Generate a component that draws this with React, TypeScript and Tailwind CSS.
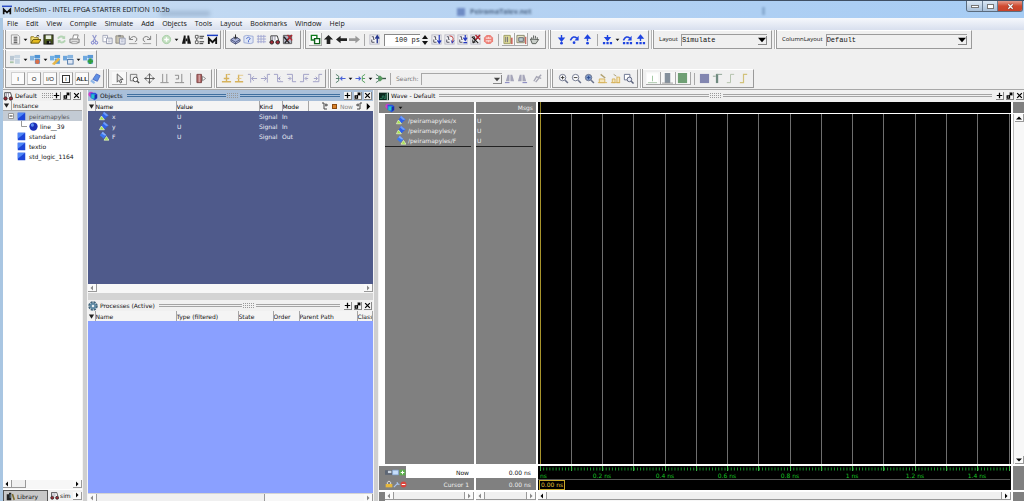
import React from "react";

type Kids = { children?: React.ReactNode };

/* ---------- icon drawings, all on a 12 x 12 grid ---------- */

const gate = (color: string) => (
  <>
    <rect x="1" y="1" width="10" height="10" fill="#f4f4f6" stroke="#b9b9c4" />
    <path d="M3 3h2v3h1M3 6v3h3" stroke={color} fill="none" />
  </>
);

const cubes = (a: string, b: string, extra?: React.ReactNode) => (
  <>
    <rect x="0" y="2" width="5" height="5" fill={a} />
    <rect x="5" y="1" width="6" height="5" fill={b} />
    <rect x="5" y="5" width="6" height="6" fill={b} stroke="#fff" strokeWidth=".5" />
    {extra}
  </>
);

const lens = (inner?: React.ReactNode, fill = "#fff") => (
  <>
    <circle cx="5" cy="5" r="3.5" fill={fill} stroke="#6b728a" />
    <path d="M7.8 7.8l3 3" stroke="#6b728a" strokeWidth="1.6" />
    {inner}
  </>
);

const gold = "#d6b25c";
const violet = "#9c9cc4";
const blue = "#1f44e0";

const icons: Record<string, React.ReactNode> = {
  caret: <path d="M3.500 5h5L6 8z" fill="#111" />,
  bigCaret: <path d="M1.500 2.500h9L6 10z" fill="#222" />,
  file: (
    <>
      <path d="M1.500 1h7l2 2v8h-9z" fill="#f4f4f4" stroke="#999" />
      <path d="M4 3.500h4M4 5.500h4M4 7.500h4M4 9.500h4" stroke="#333" />
    </>
  ),
  open: (
    <>
      <path d="M1 10V3h3l1 1h4v2" fill="#f7e27a" stroke="#8a7410" />
      <path d="M1 10l2.500-4H12L9.500 10z" fill="#e3b91c" stroke="#5f5008" />
      <path d="M7 2.500q2-2 3 0" stroke="#222" fill="none" />
    </>
  ),
  save: (
    <>
      <rect x="1" y="1" width="10" height="10" fill="#4c5a1d" stroke="#222" />
      <rect x="3" y="1.500" width="6" height="4" fill="#e9efe0" />
      <rect x="4" y="7.500" width="5" height="3.500" fill="#111" />
      <rect x="7" y="8" width="1" height="2" fill="#fff" />
    </>
  ),
  reload: (
    <>
      <path d="M2 5q3-4 7-1M10 7q-3 4-7 1" stroke="#b4d4b4" strokeWidth="2" fill="none" />
      <path d="M10 1.500v4H6.500zM2 10.500v-4h3.500z" fill="#b4d4b4" />
    </>
  ),
  print: (
    <>
      <path d="M4 5l1-4h5L9 5" fill="#fff" stroke="#888" />
      <path d="M1 5.500h10v4H1z" fill="#ddd" stroke="#777" />
      <path d="M3 8.500h6v2H3z" fill="#fff" stroke="#999" />
    </>
  ),
  cut: (
    <>
      <path d="M4 1l3.500 7M8 1L4.500 8" stroke="#8f95cc" strokeWidth="1.200" />
      <circle cx="4" cy="9.500" r="1.500" fill="none" stroke="#6b72c8" />
      <circle cx="8" cy="9.500" r="1.500" fill="none" stroke="#6b72c8" />
    </>
  ),
  copy: (
    <>
      <path d="M1 1.500h5v7H1z" fill="#fff" stroke="#9fa4b8" />
      <path d="M5 4.500h6v6H5z" fill="#fff" stroke="#8b90a8" />
      <path d="M2.500 3.500h2M6.500 6.500h3M6.500 8.500h3" stroke="#a9aec4" />
    </>
  ),
  paste: (
    <>
      <path d="M1 2h8v8H1z" fill="#c9c4b2" stroke="#8d8a80" />
      <path d="M3.500 1h3v2h-3z" fill="#888" />
      <path d="M5 4.500h6v6.500H5z" fill="#eef0f8" stroke="#8b90a8" />
      <path d="M6.500 6.500h3M6.500 8.500h3" stroke="#a9aec4" />
    </>
  ),
  undo: (
    <>
      <path d="M1.500 2v4h4" stroke="#777" fill="none" />
      <path d="M2 5.500q4-5 7.500-1 1 3-2 4" stroke="#777" fill="none" />
      <path d="M1 10.500h9" stroke="#999" />
    </>
  ),
  redo: (
    <>
      <path d="M10.500 2v4h-4" stroke="#777" fill="none" />
      <path d="M10 5.500q-4-5-7.500-1-1 3 2 4" stroke="#777" fill="none" />
      <path d="M2 10.500h9" stroke="#999" />
    </>
  ),
  add: (
    <>
      <circle cx="6" cy="6" r="4.500" fill="#c3dfc0" stroke="#a6cda5" />
      <path d="M6 3.500v5M3.500 6h5" stroke="#fff" strokeWidth="1.500" />
    </>
  ),
  find: (
    <>
      <path d="M1 10.500L3 3h2v7.500zM11 10.500L9 3H7v7.500z" fill="#161616" />
      <path d="M3 1.500h2v2H3zM7 1.500h2v2H7zM5 5h2v3H5z" fill="#161616" />
    </>
  ),
  list: (
    <>
      <path d="M1.500 1.500h3v3h-3zM1.500 7.500h3v3h-3z" fill="#fff" stroke="#555" />
      <path d="M6 2.500h5M6 4.500h4M6 8.500h5M6 10.500h4M3 5v2" stroke="#222" />
    </>
  ),
  logo: (
    <>
      <path d="M0 1.500h12" stroke="#1c3fc4" strokeWidth="1.600" />
      <path d="M2 11V5l4 4 4-4v6" stroke="#111" strokeWidth="2" fill="none" />
    </>
  ),
  compile: (
    <>
      <path d="M1 6l5-3 5 3v2l-5 3-5-3z" fill="#aab4dc" stroke="#4a5278" />
      <path d="M1 6l5 3 5-3M6 9v2" stroke="#4a5278" fill="none" />
      <path d="M6 .5v4M4 3.500l2 2 2-2" stroke="#222" fill="none" />
    </>
  ),
  compileAll: (
    <>
      <path d="M1 2.500l3-1 7 1v7l-3 1-7-1z" fill="#dfe6f6" stroke="#9aa8d4" />
      <path d="M3.500 5q2.500-3 4.500 0L6 7v2" stroke="#4667c8" fill="none" />
    </>
  ),
  grid: (
    <path d="M1 2.500h10M1 5.500h10M1 8.500h10M2.500 1v9M5.500 1v9M8.500 1v9" stroke="#a3a8d2" />
  ),
  sim: (
    <>
      <path d="M2 7V2h7l1.500 5" fill="#fff" stroke="#333" />
      <path d="M4 2v5M6.500 2v5" stroke="#889" />
      <circle cx="3" cy="9" r="2" fill="#a22a36" stroke="#222" />
      <circle cx="9.500" cy="9" r="2" fill="#a22a36" stroke="#222" />
    </>
  ),
  simEnd: (
    <>
      <path d="M1.500 1.500h9v9h-9z" fill="#b4b4c4" stroke="#555" />
      <path d="M2 3l6 7M9.500 2L3 10" stroke="#222" strokeWidth="1.500" />
      <path d="M6 1l5 6M11 1L6 7" stroke="#b52631" strokeWidth="1.500" />
    </>
  ),
  restart: (
    <>
      <path d="M1.500 1.500h6v5h-6z" fill="#fff" stroke="#0e7a1c" strokeWidth="1.500" />
      <path d="M5 5h5.500v5.500H5z" fill="#fff" stroke="#0d5f18" strokeWidth="1.500" />
    </>
  ),
  up: <path d="M6 1l5 5H8v5H4V6H1z" fill="#222" />,
  left: <path d="M0 6l5-4v2.500h7v3H5V10z" fill="#222" />,
  right: <path d="M12 6L7 2v2.500H0v3h7V10z" fill="#999" />,
  runUp: (
    <>
      {gate("#445")}
      <path d="M9 10V3M7 5l2-3 2 3" stroke="#24368f" strokeWidth="1.500" fill="none" />
    </>
  ),
  run: (
    <>
      {gate("#445")}
      <path d="M9 1v8M7 7l2 3 2-3" stroke="#2438bf" strokeWidth="1.300" fill="none" />
    </>
  ),
  runCont: (
    <>
      {gate("#445")}
      <path d="M6 2q4 0 4 3l-1 5" stroke="#b33" fill="none" />
      <path d="M8 7l1 3 2-3" stroke="#2438bf" fill="none" />
    </>
  ),
  runAll: (
    <>
      {gate("#445")}
      <path d="M9 1v5M7 4l2 3 2-3M7 9.500h4" stroke="#2438bf" strokeWidth="1.300" fill="none" />
    </>
  ),
  breakRun: (
    <>
      {gate("#222")}
      <path d="M2 3l7 7M10 2L3 10" stroke="#222" strokeWidth="1.300" />
      <path d="M6 1l5 5M11 1L6 6" stroke="#b52631" strokeWidth="1.500" />
    </>
  ),
  stop: (
    <>
      <path d="M4 1h4l3 3v4l-3 3H4L1 8V4z" fill="#ec8178" />
      <path d="M3 4.500h6M3 7.500h6" stroke="#fbdcd8" strokeWidth="1.200" />
      <path d="M6 3v2M6 7v2" stroke="#fbdcd8" />
    </>
  ),
  perf: (
    <>
      <path d="M1 1.500h7v9H1z" fill="#e4e09a" stroke="#9b9b62" />
      <path d="M3 3v6M5 3v6" stroke="#667" />
      <path d="M9.500 4v7" stroke="#c9695f" strokeWidth="2" />
    </>
  ),
  memory: (
    <>
      <path d="M1 1.500h8v8H1z" fill="#e9e7c4" stroke="#84846a" />
      <path d="M3 4h5v4H3z" fill="#bcc" stroke="#667" />
      <path d="M10.500 3v8" stroke="#c9695f" strokeWidth="1.500" />
    </>
  ),
  hand: (
    <path
      d="M3 6V3.500M5 5V1.500M7 5V2M9 6V3.500M1.500 5.500l2 5h4L10.500 6z"
      fill="#c9cec9"
      stroke="#525852"
    />
  ),
  stepInto: (
    <>
      <path d="M6 1v5M3.500 4.500L6 7.500l2.500-3z" stroke={blue} strokeWidth="1.500" fill={blue} />
      <circle cx="6" cy="10" r="1.500" fill={blue} />
    </>
  ),
  stepOver: (
    <>
      <path d="M1.500 7q3-6 7-2.500" stroke={blue} strokeWidth="1.700" fill="none" />
      <path d="M10.500 2v5H6z" fill={blue} />
      <circle cx="5.500" cy="9.500" r="1.500" fill={blue} />
    </>
  ),
  stepOut: (
    <>
      <path d="M6 7.500V3M3.500 4.500L6 1.500l2.500 3z" stroke={blue} strokeWidth="1.500" fill={blue} />
      <circle cx="6" cy="10" r="1.500" fill={blue} />
    </>
  ),
  stepIntoAll: (
    <>
      <path d="M6 1v4M3.500 4L6 7l2.500-3z" stroke={blue} strokeWidth="1.500" fill={blue} />
      <path d="M1 10h2.500M4.800 10h2.500M8.500 10H11" stroke={blue} strokeWidth="2.400" />
    </>
  ),
  stepOverAll: (
    <>
      <path d="M1.500 7q3-6 7-2.500" stroke={blue} strokeWidth="1.700" fill="none" />
      <path d="M10.500 2v5H6z" fill={blue} />
      <path d="M1 10h2.500M4.800 10h2.500M8.500 10H11" stroke={blue} strokeWidth="2.400" />
    </>
  ),
  stepOutAll: (
    <>
      <path d="M6 7.500V3M3.500 4.500L6 1.500l2.500 3z" stroke={blue} strokeWidth="1.500" fill={blue} />
      <path d="M1 10h2.500M4.800 10h2.500M8.500 10H11" stroke={blue} strokeWidth="2.400" />
    </>
  ),
  cubeGray: cubes("#b9c7d3", "#c6d4e0", <path d="M0 9h4" stroke="#a8c4a8" strokeWidth="2" />),
  cubeRed: cubes("#7fb2e0", "#4f93d4", <circle cx="8" cy="8.500" r="2.500" fill="#d9704a" />),
  cubeEdit: cubes("#6fb0e6", "#5aa0dc", <path d="M2 11l7-7 2 2-6 6z" fill="#e6b64a" />),
  cubeSave: cubes("#6ea6dc", "#86b4e0", <rect x="5" y="6" width="6" height="5" fill="#dfe8f4" stroke="#5078a8" />),
  cubeAdd: cubes("#6fa9e0", "#5b98d6", <path d="M8 5v6M5 8h6" stroke="#2fa03c" strokeWidth="2.500" />),
  tag: (
    <>
      <path d="M3 7l4-6 4 2-3 6z" fill="#5f8fe4" stroke="#4a6cc4" />
      <path d="M1 8l4 3" stroke="#8fb7e8" strokeWidth="2.500" />
    </>
  ),
  cursor: <path d="M3.500 1v9l2-2 1.500 3 1.500-1L7 7h3z" fill="#e4e4e4" stroke="#555" />,
  zoomBox: (
    <>
      <path d="M1.500 1.500h7v7h-7z" fill="none" stroke="#777" />
      <circle cx="7" cy="7" r="2.500" fill="#fff" stroke="#444" />
      <path d="M9 9l2 2" stroke="#444" strokeWidth="1.500" />
    </>
  ),
  pan: (
    <path d="M6 .5v11M.5 6h11M4 3l2-2 2 2M4 9l2 2 2-2M3 4L1 6l2 2M9 4l2 2-2 2" stroke="#555" fill="none" />
  ),
  twoCursor: <path d="M4 1v9M8.500 1v9M1.500 10.500h9" stroke="#8b8b8b" fill="none" />,
  editWave: <path d="M1 2.500h4v4H2M1 10.500h5M8.500 1v9M6 10.500h5" stroke="#858585" fill="none" />,
  stopDraw: (
    <>
      <path d="M1 1.500h5v9H1z" fill="#b46a6a" stroke="#7c4444" />
      <path d="M3.500 2v8" stroke="#e0c0c0" />
      <path d="M7 3.500l3.500 2.500L7 8.500z" fill="#fff" stroke="#888" />
    </>
  ),
  edgeIns: (
    <>
      <path d="M6 1v8M3 6h6M1 9.500h10" stroke={gold} strokeWidth="1.500" />
      <path d="M7 1.500h3" stroke={gold} />
    </>
  ),
  edgeDel: (
    <>
      <path d="M5 2v7M1 9.500h9" stroke={gold} strokeWidth="1.500" />
      <path d="M5 2.500h5M3 6h5" stroke="#e2c784" />
    </>
  ),
  prevEdge: <path d="M1 1.500h3v9M11 6H5M7.500 3.500L5 6l2.500 2.500" stroke={violet} fill="none" />,
  nextEdge: <path d="M11 1.500H8v9M1 6h6M4.500 3.500L7 6 4.500 8.500" stroke={violet} fill="none" />,
  fallPrev: <path d="M1 1.500h4v8h6M8 6H5.500M8 4L6 6l2 2" stroke={violet} fill="none" />,
  fallNext: <path d="M1 1.500h6v8h4M2 6h3M3.500 4l2 2-2 2" stroke={violet} fill="none" />,
  risePrev: <path d="M11 1.500H5v8H1M10 6H7M8.500 4l-2 2 2 2" stroke={violet} fill="none" />,
  riseNext: <path d="M11 1.500H7.500v8H1M2 6h3.500M4 4l2 2-2 2" stroke={violet} fill="none" />,
  fanIn: (
    <>
      <path d="M1 1.500l3 2v5l-3 2M1 6h4" stroke="#4c7a66" fill="none" />
      <path d="M11.500 6H6M8 4L6 6l2 2" stroke="#4a63d6" strokeWidth="1.200" fill="none" />
    </>
  ),
  fanOut: (
    <>
      <path d="M11 1.500l-3 2v5l3 2M11 6H8" stroke="#4c9a56" fill="none" />
      <path d="M.5 6H6M4 4l2 2-2 2" stroke="#4a63d6" strokeWidth="1.200" fill="none" />
    </>
  ),
  fanBoth: (
    <>
      <path d="M1 1.500l3 2v5l-3 2M1 6h3" stroke="#4c7a66" fill="none" />
      <path d="M4 3h2l3 3-3 3H4z" fill="#5a9c62" />
      <path d="M8 6h4" stroke="#3d5a4a" strokeWidth="1.500" />
    </>
  ),
  findPrev: (
    <>
      <path d="M2 9L4 2h2v7zM11 9L9 2H7v7z" fill="#a6a6ba" />
      <path d="M1 10.500h5" stroke="#7777b8" />
    </>
  ),
  findNext: (
    <>
      <path d="M1 9L3 2h2v7zM10 9L8 2H6v7z" fill="#a6a6ba" />
      <path d="M6 10.500h5" stroke="#7777b8" />
    </>
  ),
  findOpts: <path d="M2 9l3-5 2 1 3-3M4 10l4-5 2 1" stroke="#a6a6b4" strokeWidth="1.500" fill="none" />,
  zoomIn: lens(<path d="M5 3v4M3 5h4" stroke="#333" />),
  zoomOut: lens(<path d="M3 5h4" stroke="#333" />),
  zoomFull: lens(<path d="M3 5h4M5 3v4" stroke="#2d4a8c" />, "#7f9ccb"),
  zoomCur: (
    <>
      <path d="M1 10.500h10M2.500 6.500h6v4h-6z" stroke={gold} fill="#f6e6bc" />
      <path d="M4 1.500l5 4" stroke="#b0a070" strokeWidth="1.500" />
    </>
  ),
  zoomTwo: (
    <>
      <path d="M1 10.500h10M2.500 6.500h3v4h-3zM7.500 4.500h3v6h-3z" stroke={gold} fill="#f6e6bc" />
      <path d="M4 1.500l3 2" stroke="#a79a70" />
    </>
  ),
  zoomArea: (
    <>
      <path d="M1.500 1.500h6v6h-6z" fill="#fff" stroke="#66708c" />
      <circle cx="7" cy="7" r="2.500" fill="#e6eaf6" stroke="#555d77" />
      <path d="M9 9l2.500 2.500" stroke="#555d77" strokeWidth="1.500" />
    </>
  ),
  barThin: (
    <>
      <path d="M0 .5h12V11H0z" fill="#fff" />
      <path d="M6 3v6" stroke="#9cc49c" />
      <path d="M1 10.500h10" stroke="#a9c4a9" />
    </>
  ),
  barWide: (
    <>
      <path d="M3 0h6v11H3z" fill="#84909c" />
      <path d="M0 11h12" stroke="#999" />
    </>
  ),
  barFull: <path d="M1 0h10v11H1z" fill="#6f9f74" />,
  solid: <path d="M1 1h10v10H1z" fill="#8286b0" />,
  wave1: (
    <>
      <path d="M5.500 1v10" stroke="#6f8a80" strokeWidth="2.500" />
      <path d="M5 1.500h6M1 3.500h3" stroke="#8aa08f" />
    </>
  ),
  wave2: <path d="M2 10.500h4v-9h4" stroke="#b0bfa8" fill="none" />,
  wave3: <path d="M2 10.500h4v-9h4" stroke="#d2c27a" fill="none" strokeWidth="1.300" />,
  gear: (
    <>
      <circle cx="6" cy="6" r="4.300" stroke="#41637a" strokeWidth="2.800" strokeDasharray="2.400 .98" />
      <circle cx="6" cy="6" r="4" fill="#5f8aa4" />
      <circle cx="6" cy="6" r="1.500" fill="#e8eef2" />
    </>
  ),
  objects: (
    <>
      <circle cx="3.500" cy="4" r="3" fill="#d23ec8" />
      <path d="M3 2h6l2 2v5l-3 2-5-3z" fill="#2a55e0" />
      <path d="M4 4h4v5H4z" fill="#21c5c9" />
      <path d="M8 5l3-1v4l-3 2z" fill="#1b2ca8" />
    </>
  ),
  waveWin: (
    <>
      <path d="M0 2h12v9H0z" fill="#0c2a20" />
      <path d="M1 9h3V6h2v3h2V4h1" stroke="#2f8060" fill="none" />
      <path d="M10 2v9" stroke="#dfe" />
    </>
  ),
  sigIn: (
    <>
      <path d="M6 1l5.500 4.500L6.500 10 3 6z" fill="#2f62e8" />
      <path d="M6 1l5.500 4.500-3 .5L5 3z" fill="#6f9cf6" />
      <path d="M.5 10.500L3 6l3.500 4.500z" fill="#a6e34a" stroke="#eefbd0" strokeWidth=".8" />
    </>
  ),
  sigOut: (
    <>
      <path d="M4.500 1L9 5 5.500 9 1 5z" fill="#3a78f0" />
      <path d="M4.500 1L9 5l-2 .5L3 3z" fill="#86acf8" />
      <path d="M6 11l3-4.500 3 4.500z" fill="#a6e34a" stroke="#eefbd0" strokeWidth=".8" />
    </>
  ),
  unit: (
    <>
      <path d="M1 1h10v10H1z" fill="#1d45d8" />
      <path d="M1 1h10L1 9z" fill="#4f86f6" />
    </>
  ),
  ball: (
    <>
      <circle cx="6" cy="6" r="5.500" fill="#1a2fb8" />
      <circle cx="4.500" cy="4" r="2.200" fill="#5d8df2" />
    </>
  ),
  books: (
    <>
      <path d="M1 3h3v8H1zM4 1h3v10H4z" fill="#222" />
      <path d="M7.500 3l2-.7L12 10l-2 1z" fill="#7a6a2a" />
      <path d="M5 3h1v5H5z" fill="#7aa7c4" />
    </>
  ),
  savePic: (
    <>
      <path d="M0 2h12v8H0z" fill="#5d6674" />
      <path d="M5 3h6v4H5z" fill="#ced7e2" />
    </>
  ),
  sheet: <path d="M1 2h10v8H1z" fill="#c7defa" stroke="#7aa4da" />,
  plusGreen: (
    <>
      <path d="M1 1h10v10H1z" fill="#5cae4c" />
      <path d="M6 3v6M3 6h6" stroke="#fff" strokeWidth="1.800" />
    </>
  ),
  lock: (
    <>
      <path d="M3.500 6V3.500q2.500-4 5 0V6" stroke="#ddd" strokeWidth="1.500" fill="none" />
      <path d="M1 6h10v5H1z" fill="#e8b93c" />
    </>
  ),
  wrench: <path d="M1.500 10.500l6-6M7 2l1 3 3 1" stroke="#a8c4f0" strokeWidth="2" fill="none" />,
  minusRed: (
    <>
      <circle cx="6" cy="6" r="5" fill="#d9453c" />
      <path d="M3 6h6" stroke="#fff" strokeWidth="1.800" />
    </>
  ),
};

function Icon({ name, size = "size-3" }: { name: string; size?: string }) {
  return (
    <svg viewBox="0 0 12 12" className={`${size} shrink-0`} fill="none" aria-hidden="true">
      {icons[name]}
    </svg>
  );
}

/* ---------- toolbar parts ---------- */

function Group({ children, last = false }: Kids & { last?: boolean }) {
  return (
    <div className="flex shrink-0 items-stretch">
      <div className="w-[3px] shrink-0 border-x border-l-[#b4b4b4] border-r-[#9c9c9c] bg-white" />
      <div
        className={`flex items-center border-b border-r border-[#9a9a9a] border-t border-t-white pl-[3px] pr-px ${last ? "" : "mr-[2px]"}`}
      >
        {children}
      </div>
    </div>
  );
}

function Tools({ names, wide = false }: { names: string; wide?: boolean }) {
  return (
    <>
      {names.split(" ").map((n, i) => {
        if (n === "|") return <span key={i} className="mx-[3px] h-3 w-px bg-[#a8a8a8]" />;
        const boxed = n.startsWith("+");
        const name = boxed ? n.slice(1) : n;
        const width = name === "caret" ? "w-[7px]" : wide ? "w-[15px]" : "w-[13px]";
        return (
          <button
            key={i}
            type="button"
            aria-label={name}
            className={`flex h-[13px] shrink-0 items-center justify-center overflow-hidden ${width} ${
              boxed ? "border-b border-r border-[#a8a8a8] bg-[#f8f8f8]" : ""
            }`}
          >
            <Icon name={name} size={name === "caret" ? "size-[9px]" : "size-[11px]"} />
          </button>
        );
      })}
    </>
  );
}

function Combo({ id, label, value, width }: { id: string; label: string; value: string; width: string }) {
  return (
    <div className="flex items-center gap-[3px] pl-[2px] pr-[3px]">
      <label htmlFor={id} className="whitespace-nowrap font-['Open_Sans',sans-serif]">
        {label}
      </label>
      <div className={`flex h-3 items-center border-l border-t border-[#9c9c9c] ${width}`}>
        <select
          id={id}
          className="h-full min-w-0 flex-1 appearance-none bg-transparent font-['Liberation_Mono',monospace] text-[7px] leading-[10px]"
        >
          <option>{value}</option>
        </select>
        <svg viewBox="0 0 9 9" className="size-[9px] border-b border-r border-[#888]" aria-hidden="true">
          <path d="M0 2h9L4.500 7z" fill="#000" />
        </svg>
      </div>
    </div>
  );
}

/* ---------- panel parts ---------- */

const paneGlyphs = [
  ["Zoom", "M4.500 1v7M1 4.500h7"],
  ["Undock", "M1.500 5h3v3h-3zM4.500 1.500h3v3M7.500 1.500l-3 3"],
  ["Close", "M1.500 1.500l6 6M7.500 1.500l-6 6"],
];

function PanelHead({ icon, title, active = false, edge = false }: { icon: string; title: string; active?: boolean; edge?: boolean }) {
  const line = active ? "border-[#3f6f9f]" : "border-[#a4a4a4]";
  return (
    <div className={`flex h-[11px] shrink-0 items-center gap-[2px] overflow-hidden ${active ? "bg-[#a9bfd9]" : "bg-[#f0f0f0]"} ${edge ? "pr-0" : "pr-px"}`}>
      <Icon name={icon} size="size-[10px]" />
      <h2 className="whitespace-nowrap">{title}</h2>
      <div className="flex min-w-0 flex-1 items-center gap-px px-[2px]">
        <span className={`h-[3px] flex-1 border-y ${line}`} />
        <svg className="h-[5px] w-3 shrink-0" aria-hidden="true">
          <path d="M0 .5h12M0 2.500h12M0 4.500h12" stroke="#999" strokeDasharray="1 1" />
        </svg>
        <span className={`h-[3px] flex-1 border-y ${line}`} />
      </div>
      {paneGlyphs.map(([label, d]) => (
        <button key={label} type="button" aria-label={label} className="flex size-2 shrink-0 items-center justify-center border-b border-r border-[#888] bg-[#f4f4f4]">
          <svg viewBox="0 0 9 9" className="size-[7px]" aria-hidden="true">
            <path d={d} stroke="#000" strokeWidth="1.600" fill="none" />
          </svg>
        </button>
      ))}
    </div>
  );
}

const arrowPaths: Record<string, string> = {
  left: "M5 1.500L2.500 4 5 6.500z",
  right: "M3 1.500L5.500 4 3 6.500z",
  up: "M1 5.500L4 2.500l3 3z",
  down: "M1 2.500l3 3 3-3z",
};

function Arrow({ dir, dim = false }: { dir: string; dim?: boolean }) {
  return (
    <button
      type="button"
      aria-label={`Scroll ${dir}`}
      className="flex h-2 w-[9px] shrink-0 items-center justify-center border-b border-r border-[#999] bg-[#fafafa]"
    >
      <svg viewBox="0 0 8 8" className="size-2" aria-hidden="true">
        <path d={arrowPaths[dir]} fill={dim ? "#888" : "#000"} />
      </svg>
    </button>
  );
}

function HScroll({ thumb, dim = false }: { thumb?: string; dim?: boolean }) {
  return (
    <div className="flex h-[9px] flex-1 shrink-0 items-start overflow-hidden bg-[#f7f7f7]">
      <Arrow dir="left" dim={dim} />
      <div className="flex h-2 min-w-0 flex-1">
        {thumb && <div className={`h-full border-b border-r border-[#999] bg-[#f0f0f0] ${thumb}`} />}
      </div>
      <Arrow dir="right" dim={dim} />
    </div>
  );
}

const th = "h-[10px] border-r border-[#a5a5a5] p-0 text-left font-normal whitespace-nowrap overflow-hidden";

/* ---------- data ---------- */

const menus = ["File", "Edit", "View", "Compile", "Simulate", "Add", "Objects", "Tools", "Layout", "Bookmarks", "Window", "Help"];

const signals = [
  { name: "x", icon: "sigIn", value: "U", kind: "Signal", mode: "In" },
  { name: "y", icon: "sigIn", value: "U", kind: "Signal", mode: "In" },
  { name: "F", icon: "sigOut", value: "U", kind: "Signal", mode: "Out" },
];

const gridStep = 31.27;
const gridLines = Array.from({ length: 16 }, (_, i) => Math.round(1.5 + i * gridStep));
const rulerLabels = ["0.2 ns", "0.4 ns", "0.6 ns", "0.8 ns", "1 ns", "1.2 ns", "1.4 ns"];

/* ---------- panels ---------- */

function TitleBar() {
  return (
    <header className="relative flex h-[18px] shrink-0 items-start border-t border-[#3f4f63] bg-linear-to-r from-[#c9ddf2] via-[#b5d2f2] to-[#a6ccf4]">
      <div className="flex h-[17px] items-center gap-[2px] pl-[2px]">
        <Icon name="logo" size="size-[10px]" />
        <h1 className="font-['Open_Sans',sans-serif] text-[7px] leading-[10px] whitespace-nowrap">
          ModelSim - INTEL FPGA STARTER EDITION 10.5b
        </h1>
      </div>
      <div aria-hidden="true" className="absolute left-[160px] top-[10px] h-[5px] w-[50px] bg-[#6d87a4] opacity-40 blur-[2px]" />
      <div aria-hidden="true" className="absolute left-[457px] top-[6px] flex items-center gap-[5px] blur-[1px]">
        <span className="size-2 bg-[#6f8cc4]" />
        <span className="font-['Open_Sans',sans-serif] text-[7px] leading-[10px] font-bold text-[#4c6484]">PeiramaTalev.net</span>
      </div>
      <div aria-hidden="true" className="absolute left-[762px] top-[6px] h-2 w-[3px] bg-[#6f93ba] opacity-60 blur-[1px]" />
      <div className="ml-auto mr-px flex h-[11px] overflow-hidden rounded-b-[3px] border border-t-0 border-[#5a6b7d]">
        <button type="button" aria-label="Minimize" className="flex w-4 items-center justify-center border-r border-[#6b7f95] bg-linear-to-b from-[#dbe8f5] to-[#a9c0d9]">
          <span className="h-[3px] w-2 border border-[#777] bg-white" />
        </button>
        <button type="button" aria-label="Maximize" className="flex w-[15px] items-center justify-center border-r border-[#6b7f95] bg-linear-to-b from-[#dbe8f5] to-[#a9c0d9]">
          <span className="h-[5px] w-[7px] border border-[#777] bg-white" />
        </button>
        <button type="button" aria-label="Close window" className="flex w-[24px] items-center justify-center bg-linear-to-b from-[#e39a8a] via-[#cf4a30] to-[#c8432a]">
          <svg viewBox="0 0 8 8" className="size-[7px]" aria-hidden="true">
            <path d="M1.500 1.500l5 5M6.500 1.500l-5 5" stroke="#5c2a22" strokeWidth="2.600" />
            <path d="M1.500 1.500l5 5M6.500 1.500l-5 5" stroke="#fff" strokeWidth="1.600" />
          </svg>
        </button>
      </div>
    </header>
  );
}

function Toolbars() {
  return (
    <div className="flex shrink-0 flex-col gap-px border-b border-[#a8a8a8] pb-px">
      <div className="flex h-[19px] items-stretch">
        <Group>
          <Tools names="file caret open save reload print | cut copy paste undo redo | add caret find list logo" />
        </Group>
        <Group>
          <Tools names="compile compileAll grid sim simEnd" />
          <span className="w-[5px]" />
        </Group>
        <Group>
          <Tools names="+restart up left right | runUp" />
          <input
            aria-label="Run length"
            defaultValue="100 ps"
            className="ml-[3px] h-3 w-9 border-l border-t border-[#888] bg-white text-right font-['Liberation_Mono',monospace] text-[7px] leading-[10px]"
          />
          <svg viewBox="0 0 8 12" className="mx-px h-3 w-2" aria-hidden="true">
            <path d="M1 5l3-4 3 4zM1 7l3 4 3-4z" fill="#111" />
          </svg>
          <Tools names="run runCont runAll breakRun stop | +perf +memory hand" />
          <span className="w-[3px]" />
        </Group>
        <Group>
          <span className="w-px" />
          <Tools names="stepInto stepOver stepOut | stepIntoAll caret stepOverAll stepOutAll" />
        </Group>
        <Group>
          <Combo id="layout" label="Layout" value="Simulate" width="w-[86px]" />
        </Group>
        <Group last>
          <Combo id="column-layout" label="ColumnLayout" value="Default" width="w-[141px]" />
        </Group>
      </div>
      <div className="flex h-[18px] items-stretch">
        <Group last>
          <Tools names="cubeGray caret cubeRed caret cubeEdit cubeSave caret cubeAdd" />
        </Group>
      </div>
      <div className="flex h-[19px] items-stretch">
        <Group>
          <div className="flex gap-[2px] pl-[2px]">
            {["I", "O", "I/O", "[i]", "ALL"].map((t) => (
              <button
                key={t}
                type="button"
                className={`flex h-[13px] w-[14px] items-center justify-center border border-[#d0d0d0] border-b-[#999] border-r-[#999] bg-[#fbfbfb] font-['Liberation_Sans',sans-serif] leading-[8px] ${t === "ALL" ? "font-bold" : ""}`}
              >
                {t === "[i]" ? <span className="border border-[#333] px-[2px] leading-[6px]">i</span> : t}
              </button>
            ))}
          </div>
          <Tools names="tag" />
        </Group>
        <Group>
          <Tools wide names="+cursor zoomBox pan twoCursor editWave | stopDraw" />
          <span className="w-px" />
        </Group>
        <Group>
          <Tools names="edgeIns edgeDel prevEdge nextEdge fallPrev fallNext risePrev riseNext" />
        </Group>
        <Group>
          <Tools names="fanIn caret fanOut caret fanBoth |" />
          <label htmlFor="search" className="px-[2px] text-[#777]">Search:</label>
          <div className="flex h-3 w-[81px] items-center border-l border-t border-[#a8a8a8]">
            <input id="search" className="h-full min-w-0 flex-1 bg-transparent" />
            <svg viewBox="0 0 9 9" className="size-[9px] border-b border-r border-[#888]" aria-hidden="true">
              <path d="M1 3h7L4.500 7z" fill="#444" />
            </svg>
          </div>
          <span className="w-px" />
          <Tools names="findPrev findNext" />
          <span className="w-[2px]" />
          <Tools names="findOpts" />
          <span className="w-[2px]" />
        </Group>
        <Group>
          <span className="w-px" />
          <Tools names="zoomIn zoomOut zoomFull zoomCur zoomTwo zoomArea" />
          <span className="w-px" />
        </Group>
        <Group last>
          <Tools wide names="+barThin +barWide +barFull |" />
          <Tools names="solid wave1 wave2 wave3" />
          <span className="w-[2px]" />
        </Group>
      </div>
    </div>
  );
}

function TreeItem({ name, icon = "unit", indent = "pl-[14px]" }: { name: string; icon?: string; indent?: string }) {
  return (
    <li className={`flex h-[10px] items-center gap-[2px] whitespace-nowrap ${indent}`}>
      <Icon name={icon} size="size-[9px]" />
      <span className="pl-px">{name}</span>
    </li>
  );
}

function InstancePanel() {
  return (
    <section className="flex w-[79px] shrink-0 flex-col overflow-hidden bg-white">
      <PanelHead icon="sim" title="Default" />
      <div className="flex h-[10px] shrink-0 items-center gap-px border-b border-[#a5a5a5] bg-[#f4f4f4]">
        <Icon name="bigCaret" size="size-[7px]" />
        <span className="border-l border-[#a5a5a5] pl-px">Instance</span>
      </div>
      <ul className="min-h-0 flex-1">
        <li className="flex h-[10px] items-center gap-[2px] bg-[#c3cbd4] pl-1 whitespace-nowrap text-[#555]">
          <svg viewBox="0 0 8 8" className="size-2" aria-hidden="true">
            <path d="M1.500 1.500h5v5h-5z" fill="#fff" stroke="#999" />
            <path d="M2.500 4h3" stroke="#333" />
          </svg>
          <Icon name="unit" size="size-[9px]" />
          <span className="pl-px">peiramapyles</span>
        </li>
        <li className="flex h-[10px] items-center gap-[2px] pl-[18px] whitespace-nowrap">
          <svg viewBox="0 0 6 10" className="h-[10px] w-[6px]" aria-hidden="true">
            <path d="M.5 0v5.500H6" stroke="#999" fill="none" />
          </svg>
          <Icon name="ball" size="size-[9px]" />
          line__39
        </li>
        <TreeItem name="standard" />
        <TreeItem name="textio" />
        <TreeItem name="std_logic_1164" />
      </ul>
      <div className="flex h-[10px] shrink-0">
        <HScroll thumb="w-[14px]" />
      </div>
      <nav className="flex h-[11px] shrink-0 items-center overflow-hidden bg-[#f0f0f0]">
        <button type="button" className="flex h-full w-[45px] shrink-0 items-center gap-[2px] border-x border-t border-[#555] bg-[#c8c8c8] pl-[2px]">
          <Icon name="books" size="size-[9px]" />
          Library
        </button>
        <button type="button" className="flex h-full w-[25px] shrink-0 items-center gap-px pl-[2px]">
          <Icon name="sim" size="size-[9px]" />
          sim
        </button>
        <Arrow dir="right" />
      </nav>
    </section>
  );
}

function ObjectsPanel() {
  return (
    <section className="flex h-[204px] shrink-0 flex-col">
      <PanelHead icon="objects" title="Objects" active />
      <div className="min-h-0 flex-1 overflow-hidden bg-[#4f5a8b]">
        <table className="w-full table-fixed border-collapse text-[#eef0f8]">
          <thead className="bg-[#f4f4f4] text-black">
            <tr>
              <th className="w-[7px] border-r border-[#a5a5a5] p-0"><Icon name="bigCaret" size="size-[7px]" /></th>
              <th className={`w-[81px] ${th}`}>Name</th>
              <th className={`w-[83px] ${th}`}>Value</th>
              <th className={`w-[23px] ${th}`}>Kind</th>
              <th className={`w-[26px] ${th}`}>Mode</th>
              <th className="p-0 font-normal">
                <div className="flex h-[10px] items-center justify-end gap-[2px] pr-px">
                  <svg viewBox="0 0 8 8" className="size-2" aria-hidden="true"><path d="M1 1h2v6h3M4 3h3M5 1.500v3" stroke="#444" fill="none" /></svg>
                  <span className="mx-px size-[5px] border border-[#8a4a10] bg-[#d9822b]" />
                  <span className="text-[#888]">Now</span>
                  <svg viewBox="0 0 8 8" className="size-2" aria-hidden="true"><path d="M7 1H5v6H2M1 3h3M3 1.500v3" stroke="#444" fill="none" /></svg>
                  <svg viewBox="0 0 8 8" className="size-[7px]" aria-hidden="true"><path d="M2 0l4 4-4 4z" fill="#000" /></svg>
                </div>
              </th>
            </tr>
          </thead>
          <tbody>
            {signals.map((s) => (
              <tr key={s.name} className="h-[10px]">
                <td className="p-0" />
                <td className="p-0">
                  <div className="flex h-[10px] items-center gap-[3px] pl-1"><Icon name={s.icon} size="size-[10px]" />{s.name}</div>
                </td>
                <td className="p-0 pl-px">{s.value}</td>
                <td className="p-0">{s.kind}</td>
                <td className="p-0">{s.mode}</td>
                <td className="p-0" />
              </tr>
            ))}
          </tbody>
        </table>
      </div>
      <div className="flex h-[10px] shrink-0"><HScroll dim /></div>
    </section>
  );
}

function ProcessesPanel() {
  return (
    <section className="flex min-h-0 flex-1 flex-col">
      <PanelHead icon="gear" title="Processes (Active)" />
      <div className="min-h-0 flex-1 overflow-hidden bg-[#8aa0ff]">
        <table className="w-full table-fixed border-collapse">
          <thead className="bg-[#f4f4f4]">
            <tr>
              <th className="w-[7px] border-r border-[#a5a5a5] p-0"><Icon name="bigCaret" size="size-[7px]" /></th>
              <th className={`w-[81px] ${th}`}>Name</th>
              <th className={`w-[62px] ${th}`}>Type (filtered)</th>
              <th className={`w-[35px] ${th}`}>State</th>
              <th className={`w-[26px] ${th}`}>Order</th>
              <th className={`w-[58px] ${th}`}>Parent Path</th>
              <th className={th}>Class</th>
            </tr>
          </thead>
        </table>
      </div>
      <div className="flex h-2 shrink-0 overflow-hidden pt-px"><HScroll thumb="w-[168px]" dim /></div>
    </section>
  );
}

const nameCol = "w-[89px] shrink-0";
const valueCol = "w-[60px] shrink-0";
const rule = "w-[2px] shrink-0 bg-white";

function WavePanel() {
  return (
    <section className="flex min-w-0 flex-1 flex-col bg-[#f0f0f0]">
      <PanelHead icon="waveWin" title="Wave - Default" edge />
      <div className="mt-px flex h-[11px] shrink-0 bg-[#808080] text-[#eee]">
        <div className="flex w-[95px] shrink-0 items-center gap-px pl-[6px]">
          <Icon name="objects" size="size-[10px]" />
          <Icon name="caret" size="size-[9px]" />
        </div>
        <div className={rule} />
        <div className={`${valueCol} flex items-center justify-end pr-[3px]`}>Msgs</div>
        <div className={rule} />
        <svg className="h-full min-w-0 flex-1 bg-black" aria-hidden="true"><path d="M2.500 0v11" stroke="#8a7a20" /></svg>
        <div className={rule} />
        <div className="w-[11px] shrink-0" />
      </div>
      <div className="h-px shrink-0 bg-white" />
      <div className="flex min-h-0 flex-1">
        <div className="w-[6px] shrink-0 bg-white" />
        <div className={`${nameCol} bg-[#808080] pt-px text-[#eee]`}>
          <ul>
            {signals.map((s) => (
              <li key={s.name} className="flex h-[10px] items-center gap-[2px] pl-[11px] whitespace-nowrap">
                <Icon name={s.icon} size="size-[10px]" />/peiramapyles/{s.name}
              </li>
            ))}
          </ul>
          <div className="mr-[3px] mt-px h-px bg-[#222]" />
        </div>
        <div className={rule} />
        <div className={`${valueCol} bg-[#808080] pt-px text-[#eee]`}>
          {signals.map((s) => (
            <div key={s.name} className="flex h-[10px] items-center pl-px">{s.value}</div>
          ))}
          <div className="mr-[3px] mt-px h-px bg-[#222]" />
        </div>
        <div className={rule} />
        <svg className="h-full min-w-0 flex-1 bg-black" aria-hidden="true">
          {gridLines.slice(1).map((x) => (
            <rect key={x} x={x} y="0" width="1" height="100%" fill="#6e6e6e" />
          ))}
          <rect x="2" y="0" width="1" height="100%" fill="#a8942c" />
        </svg>
        <div className={rule} />
        <div className="flex w-[11px] shrink-0 flex-col items-center justify-between border-l border-[#bbb] bg-[#f7f7f7]">
          <Arrow dir="up" />
          <Arrow dir="down" />
        </div>
      </div>
      <div className="h-[2px] shrink-0 bg-white" />
      <div className="flex h-6 shrink-0 bg-[#808080]">
        <div className="flex w-[95px] shrink-0 flex-col">
          <div className="flex h-3 items-stretch">
            <div className="flex w-[27px] items-center pl-[6px]">
              <Icon name="savePic" size="size-[7px]" />
              <Icon name="sheet" size="size-[7px]" />
              <Icon name="plusGreen" size="size-[7px]" />
            </div>
            <div className="flex flex-1 items-center justify-end bg-white pr-[5px]">Now</div>
          </div>
          <div className="flex h-3 items-center pl-[6px] text-[#eee]">
            <Icon name="lock" size="size-[8px]" />
            <Icon name="wrench" size="size-[7px]" />
            <Icon name="minusRed" size="size-[7px]" />
            <span className="ml-auto pr-[5px]">Cursor 1</span>
          </div>
        </div>
        <div className={rule} />
        <div className={valueCol}>
          <div className="flex h-3 items-center justify-end bg-white pr-[5px]">0.00 ns</div>
          <div className="flex h-3 items-center justify-end pr-[5px] text-[#eee]">0.00 ns</div>
        </div>
        <div className={rule} />
        <div className="relative min-w-0 flex-1 overflow-hidden bg-black">
          <svg className="h-6 w-full" aria-hidden="true">
            <path d="M2 3h470" stroke="#17912a" strokeWidth="3" strokeDasharray="1 2.127" />
            {gridLines.map((x) => (
              <rect key={x} x={x} y="0" width="1" height="5" fill="#3bb045" />
            ))}
            <text x="2" y="12" fontSize="6" fill="#18c426">ns</text>
            {rulerLabels.map((t, i) => (
              <text key={t} x={Math.round(1.5 + (i + 1) * 2 * gridStep)} y="12" textAnchor="middle" fontSize="6" fill="#18c426">{t}</text>
            ))}
            <path d="M0 13.500h472" stroke="#555" />
          </svg>
          <span className="absolute left-px top-[14px] border border-[#c8a92a] bg-black px-px leading-[8px] text-[#e6c63a]">0.00 ns</span>
        </div>
        <div className={rule} />
        <div className="w-[11px] shrink-0" />
      </div>
      <div className="h-[2px] shrink-0 bg-white" />
      <div className="flex h-[9px] shrink-0 bg-[#808080]">
        <div className="w-[6px] shrink-0" />
        <div className={`${nameCol} flex`}><HScroll thumb="w-full" dim /></div>
        <div className={rule} />
        <div className={`${valueCol} flex`}><HScroll thumb="w-full" dim /></div>
        <div className={rule} />
        <div className="flex min-w-0 flex-1"><HScroll thumb="w-full" /></div>
        <div className={rule} />
        <div className="w-[11px] shrink-0" />
      </div>
    </section>
  );
}

export default function App() {
  return (
    <div className="flex h-screen flex-col overflow-hidden bg-[#f0f0f0] font-['DejaVu_Sans',sans-serif] text-[6px] leading-[9px] text-[#111]">
      <TitleBar />
      <div className="flex min-h-0 flex-1 flex-col border-l-[3px] border-[#a9c6e2]">
        <nav className="flex h-3 shrink-0 items-center gap-2 bg-linear-to-b from-[#f6f8fc] to-[#d8dfee] pl-1 font-['Open_Sans',sans-serif] text-[7px] leading-[10px]">
          {menus.map((m) => (
            <button key={m} type="button">{m}</button>
          ))}
        </nav>
        <Toolbars />
        <main className="flex min-h-0 flex-1">
          <InstancePanel />
          <div className="w-[6px] shrink-0 border-x border-[#f4f4f4] bg-[#cfcfcf]" />
          <div className="flex w-[285px] shrink-0 flex-col gap-[6px] bg-[#d4d4d4]">
            <ObjectsPanel />
            <ProcessesPanel />
          </div>
          <div className="w-[6px] shrink-0 border-x border-[#f4f4f4] bg-[#cfcfcf]" />
          <WavePanel />
        </main>
      </div>
    </div>
  );
}
